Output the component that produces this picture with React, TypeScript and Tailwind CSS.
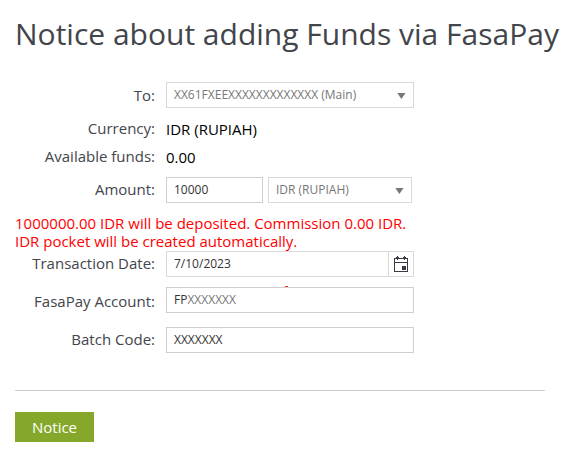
import React from "react";

const box = "border bg-white text-[12px] leading-[16px] pl-[7px] flex items-center h-[26px]";

function Row({ label, h, shift = "", children }: { label: string; h: string; shift?: string; children: React.ReactNode }) {
  return (
    <div className={`flex items-center ${h}`}>
      <label className={`w-[155px] shrink-0 text-right text-[15px] leading-[20px] text-[#42454a] ${shift}`}>{label}</label>
      <div className="ml-[11px] flex items-center">{children}</div>
    </div>
  );
}

function Caret() {
  return (
    <svg width="9" height="6" viewBox="0 0 9 6" className="ml-auto mr-[7px] mt-[2px]">
      <path d="M0.3 0h8.2L4.4 6z" fill="#777" />
    </svg>
  );
}

function CalendarIcon() {
  return (
    <svg width="14" height="16" viewBox="0 0 14 16" shapeRendering="crispEdges">
      <path d="M0 2h14v14H0zM1 3v3h12V3zM1 7v8h12V7z" fill="#3b3b43" fillRule="evenodd" />
      <path d="M3 0h1v4H3zM10 0h1v4h-1zM8 10h4v4H8zM2 1h3v1H2zM9 1h3v1H9z" fill="#3b3b43" />
    </svg>
  );
}

export default function App() {
  return (
    <main className="h-[460px] w-[570px] overflow-hidden bg-white font-['Open_Sans',sans-serif]">
      <h1 className="ml-[15px] h-[82px] whitespace-nowrap pt-[12px] text-[30px] font-normal leading-[44px] text-[#42454a]">
        Notice about adding Funds via FasaPay
      </h1>
      <Row label="To:" h="h-[26px]">
        <div className={`${box} w-[248px] border-[#d9d9d9] text-[#777]`}>XX61FXEEXXXXXXXXXXXXX (Main)<Caret /></div>
      </Row>
      <div className="h-[7px]" />
      <Row label="Currency:" h="h-[28px]" shift="pb-[2px]"><span className="text-[15px] text-black">IDR (RUPIAH)</span></Row>
      <Row label="Available funds:" h="h-[28px]" shift="pb-[2px]"><span className="text-[15px] text-black">0.00</span></Row>
      <div className="h-[6px]" />
      <Row label="Amount:" h="h-[26px]" shift="pb-[2px]">
        <div className={`${box} w-[97px] border-[#cfcfcf] text-[#333]`}>10000</div>
        <div className={`${box} ml-[5px] w-[144px] border-[#d9d9d9] text-[#777]`}>IDR (RUPIAH)<Caret /></div>
      </Row>
      <p className="ml-[15px] mt-[11px] mb-px h-[36px] whitespace-nowrap text-[15px] leading-[18px] text-[#f00]">
        1000000.00 IDR will be deposited. Commission 0.00 IDR.<br />IDR pocket will be created automatically.
      </p>
      <Row label="Transaction Date:" h="h-[26px]" shift="pb-[2px]">
        <div className={`${box} w-[248px] border-[#d9d9d9] text-[#333]`}>
          7/10/2023
          <span className="ml-auto flex h-[24px] w-[25px] items-center justify-center border-l border-[#d9d9d9]"><CalendarIcon /></span>
        </div>
      </Row>
      <div className="flex h-[10px] items-end pl-[285px]"><span className="h-px w-[3px] bg-[#f22]" /></div>
      <Row label="FasaPay Account:" h="h-[26px]" shift="pt-[2px]">
        <div className={`${box} w-[248px] border-[#cfcfcf] text-[#333]`}>FP<span className="text-[#777]">XXXXXXX</span></div>
      </Row>
      <div className="h-[14px]" />
      <Row label="Batch Code:" h="h-[26px]" shift="pb-[2px]"><div className={`${box} w-[248px] border-[#cfcfcf] text-[#333]`}>XXXXXXX</div></Row>
      <div className="ml-[15px] mt-[37px] w-[530px] border-t border-[#ccc]" />
      <button className="ml-[15px] mt-[21px] block h-[30px] w-[79px] bg-[#85a82b] text-[15px] text-white">Notice</button>
    </main>
  );
}
